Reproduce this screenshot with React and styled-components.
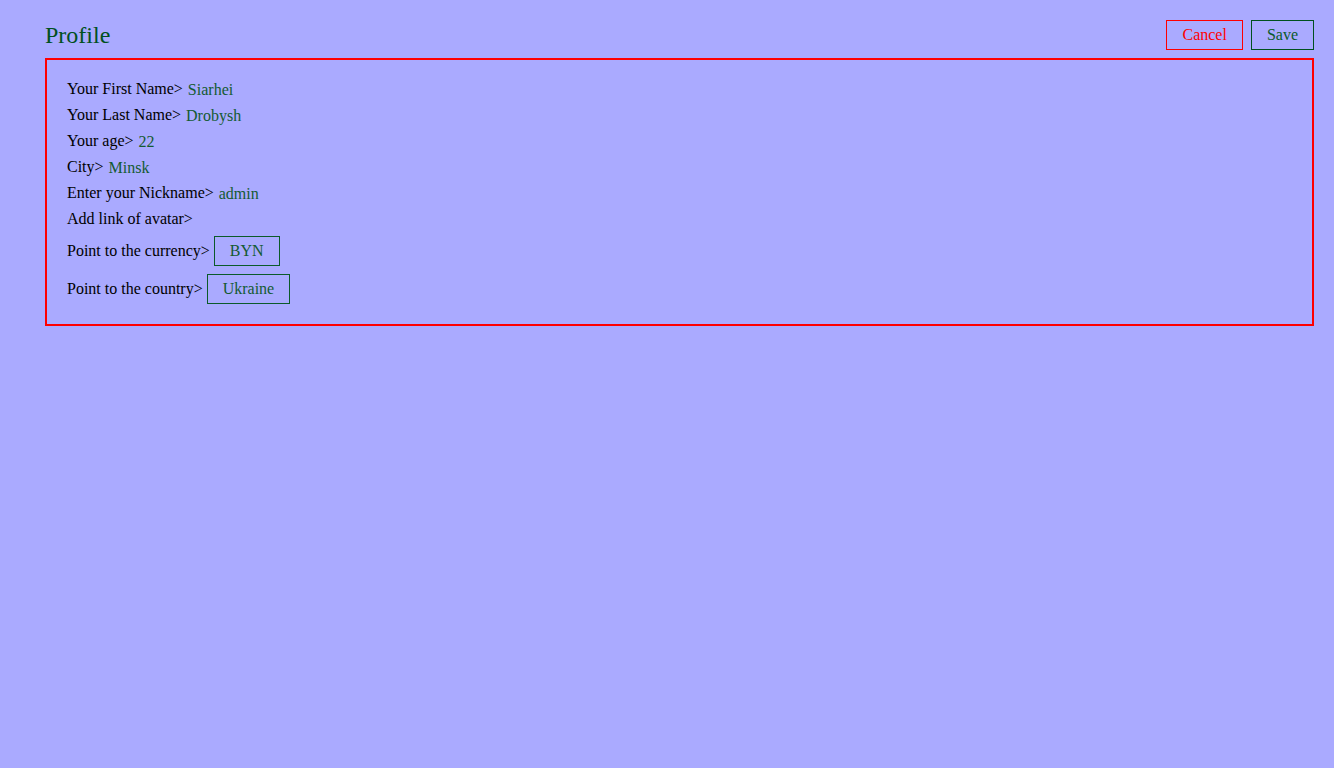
import styled, { createGlobalStyle } from 'styled-components'

const GlobalStyle = createGlobalStyle`
  html, body {
    margin: 0;
    padding: 0;
    background: #aaaaff;
    font-family: "Liberation Serif", "Times New Roman", serif;
    font-size: 16px;
    color: #000;
  }
`

const Page = styled.div`
  padding: 20px 20px 0 45px;
`

const Header = styled.div`
  display: flex;
  justify-content: space-between;
  align-items: flex-start;
  height: 30px;
  margin-bottom: 8px;
`

const Title = styled.h1`
  margin: 0;
  font-size: 24px;
  font-weight: normal;
  line-height: 30px;
  color: #00501e;
`

const Actions = styled.div`
  display: flex;
  gap: 8px;
`

const Button = styled.button`
  height: 30px;
  padding: 0 15px;
  background: transparent;
  font-family: inherit;
  font-size: 16px;
  border: 1px solid ${(p) => (p.$danger ? '#ff0000' : '#00501e')};
  color: ${(p) => (p.$danger ? '#ff0000' : '#0b5a2a')};
  cursor: pointer;
`

const Card = styled.div`
  border: 2px solid #ff0000;
  padding: 16px 20px 20px;
  display: flex;
  flex-direction: column;
`

const Row = styled.div`
  display: flex;
  align-items: center;
  height: 26px;
  white-space: pre;
`

const SelectRow = styled.div`
  display: flex;
  align-items: center;
  margin-top: ${(p) => (p.$first ? '4px' : '8px')};
`

const Value = styled.span`
  margin-left: 5px;
  padding-top: 2px;
  color: #145a32;
`

const Picker = styled.div`
  margin-left: 4px;
  height: 30px;
  box-sizing: border-box;
  padding: 0 15px;
  border: 1px solid #0b5a2a;
  color: #145a32;
  display: flex;
  align-items: center;
`

const fields = [
  ['Your First Name>', 'Siarhei'],
  ['Your Last Name>', 'Drobysh'],
  ['Your age>', '22'],
  ['City>', 'Minsk'],
  ['Enter your Nickname>', 'admin'],
  ['Add link of avatar>', ''],
]

export default function App() {
  return (
    <Page>
      <GlobalStyle />
      <Header>
        <Title>Profile</Title>
        <Actions>
          <Button $danger>Cancel</Button>
          <Button>Save</Button>
        </Actions>
      </Header>
      <Card>
        {fields.map(([label, value]) => (
          <Row key={label}>
            {label}
            {value && <Value>{value}</Value>}
          </Row>
        ))}
        <SelectRow $first>
          Point to the currency&gt;
          <Picker>BYN</Picker>
        </SelectRow>
        <SelectRow>
          Point to the country&gt;
          <Picker>Ukraine</Picker>
        </SelectRow>
      </Card>
    </Page>
  )
}
